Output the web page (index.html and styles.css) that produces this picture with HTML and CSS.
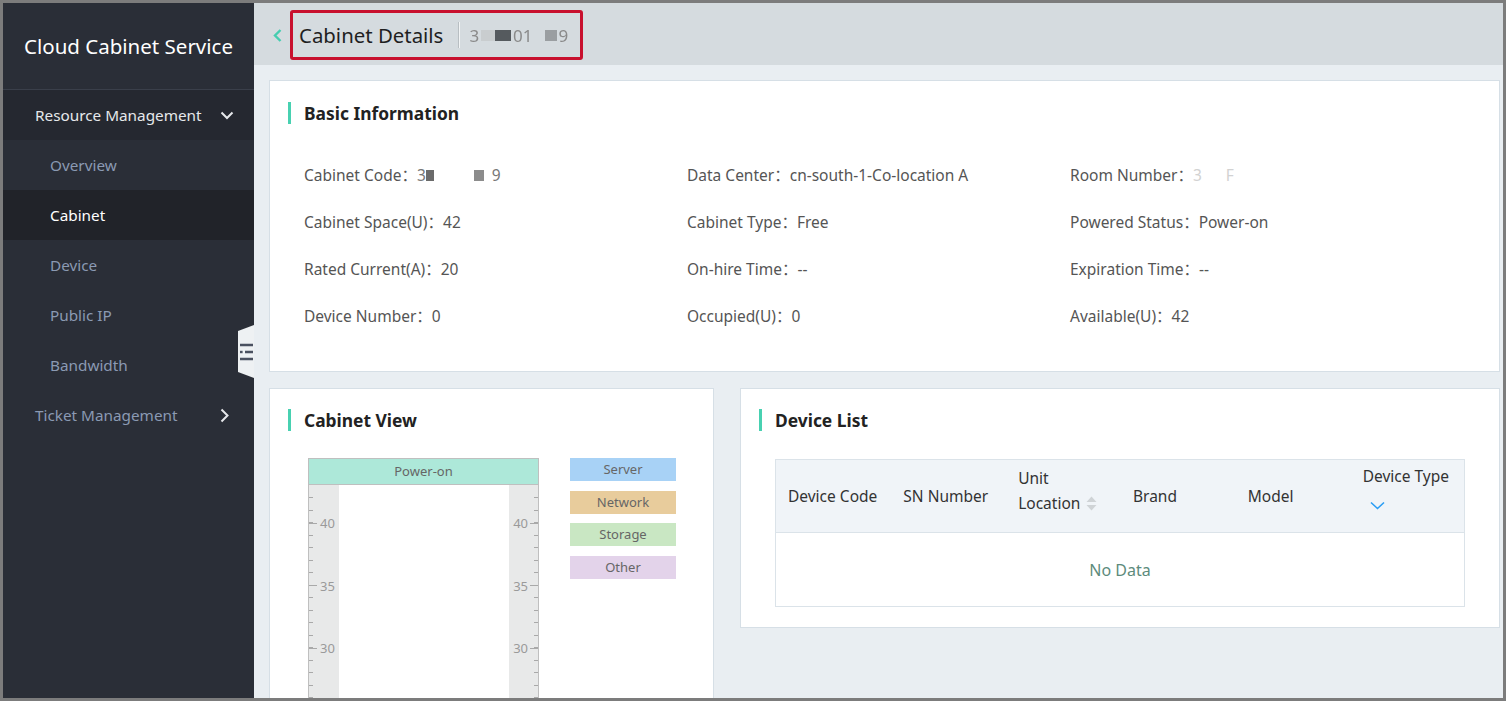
FILE: index.html
```html
<!DOCTYPE html>
<html lang="en">
<head>
<meta charset="utf-8">
<title>Cabinet Details</title>
<link rel="stylesheet" href="styles.css">
</head>
<body>
<div class="frame">
  <aside class="sidebar">
    <div class="brand">Cloud Cabinet Service</div>
    <div class="group-head open">
      <span>Resource Management</span>
      <svg class="chev" width="14" height="9" viewBox="0 0 14 9"><path d="M1.5 1.5 L7 7 L12.5 1.5" fill="none" stroke="#e6e8eb" stroke-width="2"/></svg>
    </div>
    <ul class="sub">
      <li>Overview</li>
      <li class="active">Cabinet</li>
      <li>Device</li>
      <li>Public IP</li>
      <li>Bandwidth</li>
    </ul>
    <div class="group-head closed">
      <span>Ticket Management</span>
      <svg class="chev-r" width="9" height="15" viewBox="0 0 9 15"><path d="M1.5 1.5 L7.5 7.5 L1.5 13.5" fill="none" stroke="#e6e8eb" stroke-width="2"/></svg>
    </div>
    <div class="collapse-tab">
      <svg width="13" height="18" viewBox="0 0 13 18"><path d="M0 2h13M5 9h8M0 16h13" stroke="#4a5160" stroke-width="2.4"/><rect x="0" y="7.8" width="2.6" height="2.4" fill="#4a5160"/></svg>
    </div>
  </aside>

  <main class="main">
    <header class="topbar">
      <svg class="back" width="9" height="13" viewBox="0 0 9 13"><path d="M7.5 1 L2 6.5 L7.5 12" fill="none" stroke="#46cdb0" stroke-width="2.4"/></svg>
      <div class="title-box">
        <h1>Cabinet Details</h1>
        <span class="sep"></span>
        <span class="hid">3<span class="m ma"></span><span class="m mb"></span>01<span class="m mc"></span>9</span>
      </div>
    </header>

    <div class="content">
      <section class="card basic">
        <h2 class="card-title">Basic Information</h2>
        <div class="info-grid">
          <div>Cabinet Code：<span class="code">3<span class="m m1"></span><span class="gap"></span><span class="m m2"></span>9</span></div>
          <div>Data Center：cn-south-1-Co-location A</div>
          <div>Room Number：<span class="faint">3<span class="gap2"></span>F</span></div>
          <div>Cabinet Space(U)：42</div>
          <div>Cabinet Type：Free</div>
          <div>Powered Status：Power-on</div>
          <div>Rated Current(A)：20</div>
          <div>On-hire Time：--</div>
          <div>Expiration Time：--</div>
          <div>Device Number：0</div>
          <div>Occupied(U)：0</div>
          <div>Available(U)：42</div>
        </div>
      </section>

      <div class="row">
        <section class="card cabview">
          <h2 class="card-title">Cabinet View</h2>
          <div class="cab-body">
            <div class="rack">
              <div class="rack-head">Power-on</div>
              <div class="rack-body">
                <div class="rail left">
                  <div class="mark"><span class="tick"></span><span>40</span></div>
                  <div class="mark"><span class="tick"></span><span>35</span></div>
                  <div class="mark"><span class="tick"></span><span>30</span></div>
                </div>
                <div class="slots"></div>
                <div class="rail right">
                  <div class="mark"><span class="tick"></span><span>40</span></div>
                  <div class="mark"><span class="tick"></span><span>35</span></div>
                  <div class="mark"><span class="tick"></span><span>30</span></div>
                </div>
              </div>
            </div>
            <ul class="legend">
              <li class="server">Server</li>
              <li class="network">Network</li>
              <li class="storage">Storage</li>
              <li class="other">Other</li>
            </ul>
          </div>
        </section>

        <section class="card devlist">
          <h2 class="card-title">Device List</h2>
          <table class="dtable">
            <thead>
              <tr>
                <th>Device Code</th>
                <th>SN Number</th>
                <th class="sortable"><span class="two">Unit<br>Location</span><svg class="sort" width="11" height="15" viewBox="0 0 11 15"><path d="M5.5 0.5 L10.5 6 H0.5 Z" fill="#cfd3d6"/><path d="M5.5 14.5 L10.5 9 H0.5 Z" fill="#cfd3d6"/></svg></th>
                <th>Brand</th>
                <th>Model</th>
                <th class="filter">Device Type<svg class="down" width="15" height="9" viewBox="0 0 15 9"><path d="M1 1.5 L7.5 7.5 L14 1.5" fill="none" stroke="#2a9df4" stroke-width="1.6"/></svg></th>
              </tr>
            </thead>
            <tbody>
              <tr><td colspan="6" class="empty">No Data</td></tr>
            </tbody>
          </table>
        </section>
      </div>
    </div>
  </main>
</div>
</body>
</html>
```

FILE: styles.css
```css
* { box-sizing: border-box; }
html, body { margin: 0; padding: 0; }
body {
  width: 1506px;
  height: 701px;
  overflow: hidden;
  font-family: "Noto Sans", "Noto Sans CJK SC", sans-serif;
  background: #7c7c7c;
}
ul { list-style: none; margin: 0; padding: 0; }
h1, h2 { margin: 0; }

.frame {
  width: 1506px;
  height: 701px;
  border: 3px solid #7c7c7c;
  display: flex;
  overflow: hidden;
  background: #e9eef2;
}

/* ---------- sidebar ---------- */
.sidebar {
  width: 251px;
  flex: none;
  background: #2a2e37;
  position: relative;
  color: #8b9ab3;
  font-size: 15.3px;
}
.brand {
  height: 87px;
  display: flex;
  align-items: center;
  justify-content: center;
  color: #ffffff;
  font-size: 20.5px;
  border-bottom: 1px solid #3a3f4a;
}
.group-head {
  height: 50px;
  display: flex;
  align-items: center;
  justify-content: space-between;
  padding: 0 20px 0 32px;
}
.group-head.open { background: #252830; color: #e6e8eb; }
.group-head.closed { padding-right: 25px; }
.sub li {
  height: 50px;
  line-height: 50px;
  padding-left: 47px;
}
.sub li.active { background: #212329; color: #ffffff; }

.collapse-tab {
  position: absolute;
  right: 0;
  top: 322px;
  width: 16px;
  height: 53px;
  background: #eef1f3;
  clip-path: polygon(100% 0, 100% 100%, 0 calc(100% - 6px), 0 6px);
  display: flex;
  align-items: center;
  justify-content: flex-end;
  padding-right: 1px;
}

/* ---------- main ---------- */
.main {
  flex: 1;
  min-width: 0;
  display: flex;
  flex-direction: column;
}
.topbar {
  height: 62px;
  flex: none;
  background: #d5dbdf;
  display: flex;
  align-items: center;
  padding: 2px 0 0 19px;
  gap: 8px;
}
.back { flex: none; }
.title-box {
  height: 50px;
  border: 3px solid #c8102e;
  border-radius: 3px;
  display: flex;
  align-items: center;
  padding: 0 12px 0 6px;
}
.title-box h1 {
  font-size: 20.4px;
  font-weight: 400;
  color: #1f1f1f;
}
.sep {
  width: 2px;
  height: 26px;
  background: #b8bec2;
  border-right: 1px solid #f2f4f5;
  margin: 0 9px 0 15px;
}
.hid {
  font-size: 17px;
  color: #8a8a8a;
  filter: blur(0.6px);
  display: inline-flex;
  align-items: center;
}
.m { display: inline-block; height: 11px; }
.ma { width: 14px; background: #c9cdcf; margin-left: 2px; }
.mb { width: 16px; background: #555a5e; margin-right: 2px; }
.mc { width: 12px; background: #9a9ea1; margin: 0 2px 0 12px; }

.content {
  flex: 1;
  min-height: 0;
  overflow: hidden;
  background: #e9eef2;
  padding: 15px 3px 0 15px;
  display: flex;
  flex-direction: column;
  gap: 16px;
}
.card {
  background: #ffffff;
  border: 1px solid #d6dfe6;
}
.card-title {
  display: flex;
  align-items: center;
  height: 24px;
  font-size: 17.4px;
  font-weight: 700;
  color: #222222;
}
.card-title::before {
  content: "";
  width: 3px;
  height: 22px;
  background: #48d1b1;
  margin-right: 13px;
}

.basic {
  height: 292px;
  flex: none;
  padding: 20px 19px 0 18px;
}
.info-grid {
  display: grid;
  grid-template-columns: repeat(3, 383px);
  grid-auto-rows: 47px;
  align-items: center;
  margin: 26px 0 0 16px;
  font-size: 15.5px;
  color: #555555;
}
.code { display: inline-flex; align-items: center; color: #777; }
.code .m1 { width: 8px; background: #6b6b6b; filter: blur(0.4px); }
.code .gap { width: 40px; }
.code .m2 { width: 10px; background: #8c8c8c; margin-right: 8px; filter: blur(0.4px); }
.faint { color: #d2d2d2; display: inline-flex; align-items: center; }
.gap2 { display: inline-block; width: 24px; }

.row {
  display: flex;
  gap: 26px;
  align-items: flex-start;
}
.cabview {
  width: 445px;
  flex: none;
  padding: 19px 19px 0 18px;
}
.cab-body {
  display: flex;
  align-items: flex-start;
  margin: 26px 0 0 20px;
}
.rack {
  width: 231px;
  border: 1px solid #bfbfbf;
  flex: none;
}
.rack-head {
  height: 26px;
  background: #ade8d9;
  border-bottom: 1px solid #bfbfbf;
  text-align: center;
  line-height: 25px;
  font-size: 13px;
  color: #666666;
}
.rack-body {
  display: flex;
  height: 530px;
}
.rail {
  width: 30px;
  padding-top: 6.75px;
  font-size: 13px;
  color: #9a9a9a;
  background-color: #e8e9e9;
  background-image: repeating-linear-gradient(to bottom, transparent 0, transparent 11.5px, #a9a9a9 11.5px, #a9a9a9 12.5px);
  background-size: 4px 100%;
  background-repeat: no-repeat;
}
.rail.left { background-position: left 0 top 1px; }
.rail.right { background-position: right 0 top 1px; width: 29px; }
.mark {
  height: 62.5px;
  display: flex;
  align-items: center;
}
.rail.right .mark { flex-direction: row-reverse; }
.tick {
  width: 8px;
  height: 1px;
  background: #a9a9a9;
  flex: none;
}
.rail.left .tick { margin-right: 3px; }
.rail.right .tick { margin-left: 2px; }
.slots { flex: 1; background: #ffffff; }

.legend {
  width: 106px;
  margin-left: 31px;
  display: flex;
  flex-direction: column;
  gap: 9.5px;
}
.legend li {
  height: 23px;
  line-height: 22px;
  text-align: center;
  font-size: 13px;
  color: #666666;
}
.legend .server { background: #a8d2f6; }
.legend .network { background: #e8cc9c; }
.legend .storage { background: #c9e7c3; }
.legend .other { background: #e3d3ea; }

.devlist {
  flex: 1;
  min-width: 0;
  padding: 19px 34px 20px 18px;
}
.dtable {
  margin: 27px 0 0 16px;
  width: 690px;
  border-collapse: collapse;
  table-layout: fixed;
  border: 1px solid #dbe3e9;
  font-size: 15.5px;
}
.dtable th {
  height: 73px;
  background: #f0f4f8;
  border-bottom: 1px solid #dbe3e9;
  text-align: left;
  font-weight: 400;
  color: #333333;
  padding: 0 0 0 13px;
  line-height: 25px;
  vertical-align: middle;
}
.dtable th:first-child { padding-left: 12px; }
.sortable .two { display: inline-block; vertical-align: middle; margin-top: -10px; }
.sort { vertical-align: middle; margin-left: 6px; margin-top: 14px; }
.dtable th.filter { padding-bottom: 18px; }
.down { display: block; margin: 12px 0 0 7px; }
.empty {
  height: 74px;
  text-align: center;
  color: #5d8b7c;
  font-size: 16px;
}
```
